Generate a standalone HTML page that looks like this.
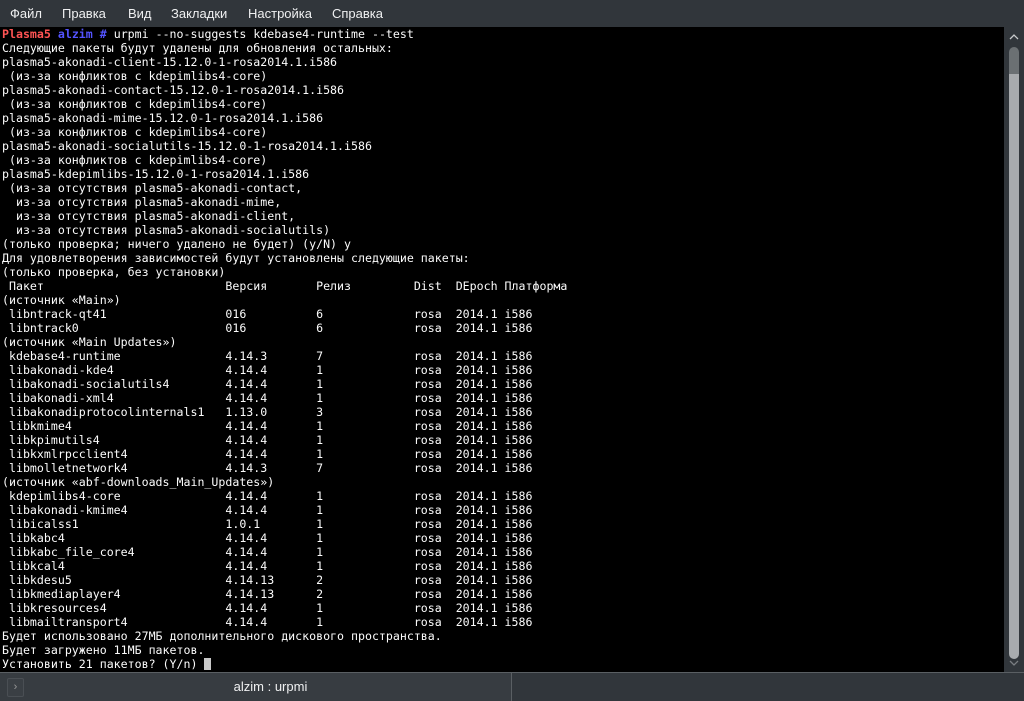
<!DOCTYPE html>
<html><head><meta charset="utf-8"><style>
body{margin:0;width:1024px;height:701px;background:#31363b;overflow:hidden;position:relative;font-family:"Liberation Sans","DejaVu Sans",sans-serif}
#menu{position:absolute;top:0;left:0;width:1024px;height:27px;background:#31363b;color:#eff0f1;font-size:13px}
#menu span{position:absolute;top:6px}
#term{position:absolute;top:27px;left:0;width:1004px;height:645px;background:#000}
pre{margin:0;position:absolute;top:0;left:2px;font-family:"DejaVu Sans Mono","Liberation Mono",monospace;font-size:11.6px;line-height:14px;color:#fcfcfc;letter-spacing:0}
.r{color:#ff5454;font-weight:bold}.b{color:#5454ff;font-weight:bold}
.cur{display:inline-block;width:7px;height:12px;background:#c8c8c8;vertical-align:-2px}
#sb{position:absolute;top:27px;left:1004px;width:20px;height:645px;background:#31363b}
#tabs{position:absolute;top:672px;left:0;width:1024px;height:29px;background:#31363b;border-top:1px solid #5a5f63;box-sizing:border-box}
#tab{position:absolute;left:0;top:0;width:481px;padding-left:30px;height:28px;background:#373c41;border-right:1px solid #5a5f63;color:#eff0f1;font-size:13px;text-align:center;line-height:28px}
#btn{position:absolute;left:7px;top:5px;width:15px;height:17px;border:1px solid #4a4f54;border-radius:2px;background:#3a3f44;color:#999;font-size:11px;line-height:16px;text-align:center}
</style></head><body>
<div id="menu"><span style="left:10px">Файл</span><span style="left:62px">Правка</span><span style="left:128px">Вид</span><span style="left:171px">Закладки</span><span style="left:248px">Настройка</span><span style="left:332px">Справка</span></div>
<div id="term"><pre><span class="r">Plasma5</span> <span class="b">alzim #</span> urpmi --no-suggests kdebase4-runtime --test
Следующие пакеты будут удалены для обновления остальных:
plasma5-akonadi-client-15.12.0-1-rosa2014.1.i586
 (из-за конфликтов с kdepimlibs4-core)
plasma5-akonadi-contact-15.12.0-1-rosa2014.1.i586
 (из-за конфликтов с kdepimlibs4-core)
plasma5-akonadi-mime-15.12.0-1-rosa2014.1.i586
 (из-за конфликтов с kdepimlibs4-core)
plasma5-akonadi-socialutils-15.12.0-1-rosa2014.1.i586
 (из-за конфликтов с kdepimlibs4-core)
plasma5-kdepimlibs-15.12.0-1-rosa2014.1.i586
 (из-за отсутствия plasma5-akonadi-contact,
  из-за отсутствия plasma5-akonadi-mime,
  из-за отсутствия plasma5-akonadi-client,
  из-за отсутствия plasma5-akonadi-socialutils)
(только проверка; ничего удалено не будет) (y/N) y
Для удовлетворения зависимостей будут установлены следующие пакеты:
(только проверка, без установки)
 Пакет                          Версия       Релиз         Dist  DEpoch Платформа
(источник «Main»)
 libntrack-qt41                 016          6             rosa  2014.1 i586
 libntrack0                     016          6             rosa  2014.1 i586
(источник «Main Updates»)
 kdebase4-runtime               4.14.3       7             rosa  2014.1 i586
 libakonadi-kde4                4.14.4       1             rosa  2014.1 i586
 libakonadi-socialutils4        4.14.4       1             rosa  2014.1 i586
 libakonadi-xml4                4.14.4       1             rosa  2014.1 i586
 libakonadiprotocolinternals1   1.13.0       3             rosa  2014.1 i586
 libkmime4                      4.14.4       1             rosa  2014.1 i586
 libkpimutils4                  4.14.4       1             rosa  2014.1 i586
 libkxmlrpcclient4              4.14.4       1             rosa  2014.1 i586
 libmolletnetwork4              4.14.3       7             rosa  2014.1 i586
(источник «abf-downloads_Main_Updates»)
 kdepimlibs4-core               4.14.4       1             rosa  2014.1 i586
 libakonadi-kmime4              4.14.4       1             rosa  2014.1 i586
 libicalss1                     1.0.1        1             rosa  2014.1 i586
 libkabc4                       4.14.4       1             rosa  2014.1 i586
 libkabc_file_core4             4.14.4       1             rosa  2014.1 i586
 libkcal4                       4.14.4       1             rosa  2014.1 i586
 libkdesu5                      4.14.13      2             rosa  2014.1 i586
 libkmediaplayer4               4.14.13      2             rosa  2014.1 i586
 libkresources4                 4.14.4       1             rosa  2014.1 i586
 libmailtransport4              4.14.4       1             rosa  2014.1 i586
Будет использовано 27МБ дополнительного дискового пространства.
Будет загружено 11МБ пакетов.
Установить 21 пакетов? (Y/n) <span class="cur"></span></pre></div>
<div id="sb">
<svg width="20" height="645" style="position:absolute;top:0;left:0">
<path d="M6 12 L10 8 L14 12" stroke="#c8cacc" stroke-width="1.3" fill="none"/>
<rect x="5" y="20" width="10" height="40" rx="5" fill="#6b7073"/>
<rect x="5" y="47" width="10" height="585" rx="5" fill="#a8abae"/>
<rect x="5" y="47" width="10" height="10" fill="#a8abae"/>
<path d="M6 634 L10 638 L14 634" stroke="#7a7e82" stroke-width="1.3" fill="none"/>
</svg></div>
<div id="tabs"><div id="tab"><div id="btn">›</div>alzim : urpmi</div></div>
</body></html>
